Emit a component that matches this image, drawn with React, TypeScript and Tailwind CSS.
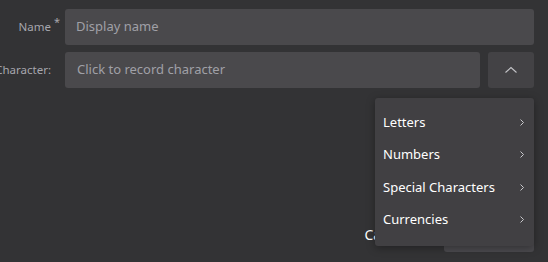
import React from "react";

const font = { fontFamily: '"Noto Sans", "Open Sans", sans-serif' };

function Chevron() {
  return (
    <svg width="6" height="9" viewBox="0 0 6 9" fill="none" className="shrink-0">
      <path d="M1.5 1.5 L4.5 4.5 L1.5 7.5" stroke="#c8c8cc" strokeWidth="1" />
    </svg>
  );
}

export default function App() {
  const items = ["Letters", "Numbers", "Special Characters", "Currencies"];
  return (
    <div
      className="relative w-[548px] h-[262px] overflow-hidden bg-[#333335] pt-[9px] pr-[14px]"
      style={font}
    >
      <div className="flex flex-col gap-[7px]">
        <div className="flex items-center">
          <div className="w-[51px] shrink-0 text-right text-[11.5px] text-[#a6a6ad] relative">
            Name
            <span className="absolute left-[54px] top-[-4px] text-[11px] text-[#a6a6ad]">*</span>
          </div>
          <div className="ml-[14px] flex-1 h-[36px] rounded-[3px] bg-[#4a494c] flex items-center pl-[11px] text-[13px] text-[#a0a0a7]">
            Display name
          </div>
        </div>
        <div className="flex items-center">
          <div className="w-[51px] shrink-0 text-right text-[11.5px] text-[#a6a6ad] whitespace-nowrap flex justify-end">
            Character:
          </div>
          <div className="ml-[14px] flex-1 h-[36px] rounded-[3px] bg-[#4a494c] flex items-center pl-[12px] text-[13px] text-[#a0a0a7]">
            Click to record character
          </div>
          <button className="ml-[8px] w-[46px] h-[36px] rounded-[3px] bg-[#434245] flex items-center justify-center">
            <svg width="14" height="8" viewBox="0 0 14 8" fill="none">
              <path d="M1.5 6.5 L7 1.5 L12.5 6.5" stroke="#c4c4c8" strokeWidth="1.1" />
            </svg>
          </button>
        </div>
      </div>

      <div className="mt-[128px] flex items-center justify-end gap-[36px]">
        <span className="text-[14px] text-white">Cancel</span>
        <div className="w-[90px] h-[36px] rounded-[3px] bg-[#4b4a4e] flex items-center justify-center text-[14px] text-white">
          Save
        </div>
      </div>

      <div className="absolute left-[375px] top-[98px] w-[159px] h-[148px] rounded-[3px] bg-[#414043] shadow-[0_2px_8px_rgba(0,0,0,0.35)] pt-[8px] pb-[10px]">
        {items.map((t) => (
          <div key={t} className="h-[32.5px] flex items-center justify-between pl-[8px] pr-[9px] text-[13px] text-white">
            <span>{t}</span>
            <Chevron />
          </div>
        ))}
      </div>
    </div>
  );
}
